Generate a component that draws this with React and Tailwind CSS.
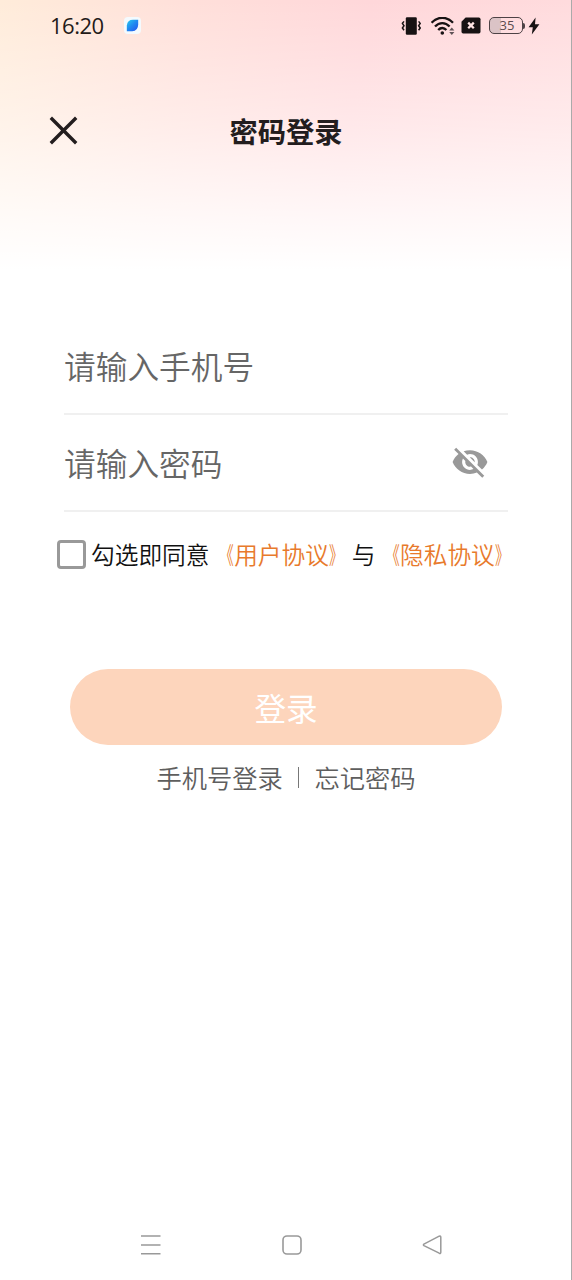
import { useState } from 'react'

function VibrateIcon() {
  return (
    <svg width="20" height="18" viewBox="0 0 20 18" fill="none">
      <rect x="4.8" y="0.3" width="11" height="17.4" rx="1.2" fill="#171213" />
      <path d="M3 4.4L1.4 6.4L3 8.8L1.4 11L3 13.2M17.6 4.4L19.2 6.4L17.6 8.8L19.2 11L17.6 13.2" stroke="#171213" strokeWidth="1.5" />
    </svg>
  )
}

function WifiIcon() {
  return (
    <svg width="24" height="18" viewBox="0 0 24 18" fill="none">
      <path d="M0.6 5.8C6.8 -0.9 15.8 -0.9 22 5.8M4 9.5C8.3 4.9 14.3 4.9 18.6 9.5M7.2 13.1C9.7 10.3 13 10.3 15.4 13.1" stroke="#171213" strokeWidth="2.3" />
      <circle cx="11.3" cy="16" r="1.8" fill="#171213" />
      <path d="M18.2 13.6L20.8 10.6L23.4 13.6ZM18.2 15L20.8 18L23.4 15Z" fill="#5f5356" />
    </svg>
  )
}

function SimIcon() {
  return (
    <svg width="20" height="17" viewBox="0 0 20 17" fill="none">
      <path d="M4.6 0.5H17.8Q19.5 0.5 19.5 2.2V14.8Q19.5 16.5 17.8 16.5H2.2Q0.5 16.5 0.5 14.8V4.8Z" fill="#171213" />
      <path d="M7.2 5.6L12.8 11.2M12.8 5.6L7.2 11.2" stroke="#ffe4e4" strokeWidth="2.3" />
    </svg>
  )
}

function Battery({ level }) {
  return (
    <div className="flex items-center">
      <div className="flex h-[17px] w-[34px] items-center justify-center rounded-[5px] border-[1.5px] border-[#4d4245] bg-[linear-gradient(to_right,#dbc3c6_35%,transparent_35%)] pl-[2px] font-['Open_Sans',sans-serif] text-[13px] leading-none font-normal text-[#5a4c4f]">
        {level}
      </div>
      <div className="h-[6px] w-[2px] rounded-r-sm bg-[#4d4245]" />
    </div>
  )
}

function StatusBar() {
  return (
    <div className="flex h-[51px] items-center pr-[31px] pl-[50px]">
      <span className="w-[54px] font-['Open_Sans',sans-serif] text-[22px] font-normal tracking-[-0.5px] text-[#231a19]">16:20</span>
      <div className="ml-[20px] flex size-[17px] items-center justify-center rounded-[4px] bg-[#f4fafe]">
        <svg width="13" height="13" viewBox="0 0 13 13">
          <defs>
            <linearGradient id="leaf" x1="0" y1="0" x2="0.9" y2="1">
              <stop offset="0.15" stopColor="#26b8ef" />
              <stop offset="0.5" stopColor="#218af0" />
              <stop offset="1" stopColor="#2457ee" />
            </linearGradient>
          </defs>
          <path d="M0.8 12.2V6.5Q1.4 0.8 7 0.8H12.2V5.5Q12 12 6.2 12.2Z" fill="url(#leaf)" />
        </svg>
      </div>
      <div className="ml-auto flex items-center">
        <VibrateIcon />
        <div className="ml-[10px]"><WifiIcon /></div>
        <div className="ml-[6px]"><SimIcon /></div>
        <div className="ml-[8px]"><Battery level={35} /></div>
        <svg className="ml-[3px]" width="12" height="18" viewBox="0 0 12 18">
          <path d="M7.6 0.6L0.6 10.2H4.8L3.8 17.4L11.4 7.2H7Z" fill="#171213" />
        </svg>
      </div>
    </div>
  )
}

function EyeOffIcon() {
  return (
    <svg className="mb-[2px]" width="38" height="38" viewBox="0 0 24 24" fill="#999">
      <path d="M12 7c2.76 0 5 2.24 5 5 0 .65-.13 1.26-.36 1.83l2.92 2.92c1.51-1.26 2.7-2.89 3.43-4.75-1.73-4.39-6-7.5-11-7.5-1.4 0-2.74.25-3.98.7l2.16 2.16C10.74 7.13 11.35 7 12 7zM2 4.27l2.28 2.28.46.46C3.08 8.3 1.78 10.02 1 12c1.73 4.39 6 7.5 11 7.5 1.55 0 3.03-.3 4.38-.84l.42.42L19.73 22 21 20.73 3.27 3 2 4.27zM7.53 9.8l1.55 1.55c-.05.21-.08.43-.08.65 0 1.66 1.34 3 3 3 .22 0 .44-.03.65-.08l1.55 1.55c-.67.33-1.41.53-2.2.53-2.76 0-5-2.24-5-5 0-.79.2-1.53.53-2.2zm4.31-.78l3.15 3.15.02-.16c0-1.66-1.34-3-3-3l-.17.01z" />
    </svg>
  )
}

function Field({ type, placeholder, children }) {
  return (
    <div className="flex h-[97px] items-center border-b-2 border-[#f0f0f0] pr-[19px]">
      <input
        type={type}
        placeholder={placeholder}
        className="min-w-0 flex-1 bg-transparent pt-px text-[31.7px] text-[#333] outline-none placeholder:text-[#666]"
      />
      {children}
    </div>
  )
}

// narrow title brackets that hug the name between them
function Agreement({ name }) {
  return (
    <a className="-mr-px ml-px text-[#e87a2c]">
      <span className="inline-block origin-right scale-x-60">《</span>
      {name}
      <span className="inline-block origin-left scale-x-60">》</span>
    </a>
  )
}

function NavBar() {
  return (
    <div className="mt-auto flex h-[70px] items-center pl-[140px]">
      <svg width="22" height="22" viewBox="0 0 22 22" stroke="#999" strokeWidth="1.6">
        <path d="M1 2H20.5M1 11H20.5M1 19.8H20.5" />
      </svg>
      <svg className="ml-[119px]" width="22" height="22" viewBox="0 0 22 22" fill="none" stroke="#999" strokeWidth="1.6">
        <rect x="2" y="2" width="18" height="18" rx="4" />
      </svg>
      <svg className="ml-[119px]" width="22" height="22" viewBox="0 0 22 22" fill="none" stroke="#999" strokeWidth="1.5" strokeLinejoin="round">
        <path d="M1.9 10.2L17.2 2.2Q18.8 1.6 18.8 3.2V18.2Q18.8 19.9 17.2 19.2L1.9 11.6Q1 10.9 1.9 10.2Z" />
      </svg>
    </div>
  )
}

export default function App() {
  const [agreed, setAgreed] = useState(false)
  const [visible, setVisible] = useState(false)

  return (
    <div className="flex h-[1280px] w-[572px] flex-col border-r border-[#aaa] bg-white bg-[linear-gradient(to_bottom,rgba(255,255,255,0),rgba(255,255,255,0.42)_45%,rgba(255,255,255,0.82)_82%,#fff),linear-gradient(100deg,#ffecda,#ffdfda_32%,#ffd7da_60%,#ffdcde)] bg-[length:100%_270px] bg-no-repeat font-['Noto_Sans_CJK_SC',sans-serif] font-[350]">
      <StatusBar />

      <header className="mt-[48px] grid h-[62px] grid-cols-[1fr_auto_1fr] items-center px-[49px]">
        <button className="justify-self-start">
          <svg width="29" height="29" viewBox="0 0 29 29" stroke="#231d1e" strokeWidth="3.4">
            <path d="M1.8 1.8L27.2 27.2M27.2 1.8L1.8 27.2" />
          </svg>
        </button>
        <h1 className="pt-[2px] pl-px text-[28.3px] font-bold text-[#231d1e]">密码登录</h1>
      </header>

      <main className="mt-[157px]">
        <div className="mr-[63px] ml-[64px]">
          <Field type="tel" placeholder="请输入手机号" />
          <Field type={visible ? 'text' : 'password'} placeholder="请输入密码">
            <button onClick={() => setVisible(!visible)}>
              <EyeOffIcon />
            </button>
          </Field>
        </div>

        <div className="mt-[25px] ml-[57px] flex items-center text-[23.7px] leading-[34px] whitespace-nowrap text-[#111]">
          <button
            onClick={() => setAgreed(!agreed)}
            className={`mr-[5px] size-[29px] rounded-[4px] border-3 border-[#999] ${agreed ? 'bg-[#e87a2c]' : 'bg-white'}`}
          />
          <span>勾选即同意</span>
          <Agreement name="用户协议" />
          <span>与</span>
          <Agreement name="隐私协议" />
        </div>

        <button className="mt-[98px] ml-[70px] flex h-[76px] w-[432px] items-center justify-center rounded-full bg-[#fdd5bc] pt-px text-[31.6px] font-normal text-white">
          登录
        </button>

        <div className="mt-[14px] flex items-center justify-center pl-px text-[25.3px] leading-[36px] text-[#5e5e5e]">
          <a>手机号登录</a>
          <span className="mx-[15px] h-[21px] w-[1.5px] bg-[#777]" />
          <a>忘记密码</a>
        </div>
      </main>

      <NavBar />
    </div>
  )
}
